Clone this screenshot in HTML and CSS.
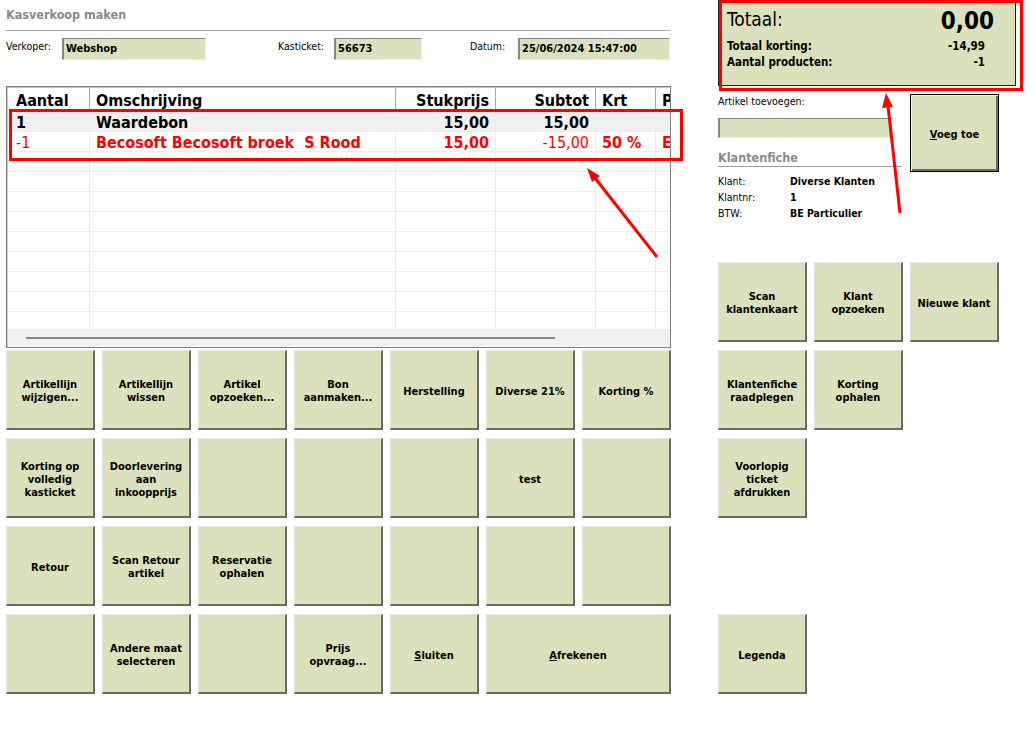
FILE: index.html
```html
<!DOCTYPE html>
<html lang="nl">
<head>
    <meta charset="UTF-8">
    <meta name="viewport" content="width=device-width, initial-scale=1.0">
    <title>Kasverkoop maken</title>
    <link rel="stylesheet" href="styles.css">
</head>
<body>
<div class="screen">
    <main class="sale">
        <h1 class="title">Kasverkoop maken</h1>

        <div class="fields">
            <span class="label label-verkoper">Verkoper:</span>
            <div class="input input-verkoper">Webshop</div>
            <span class="label label-ticket">Kasticket:</span>
            <div class="input input-ticket">56673</div>
            <span class="label label-datum">Datum:</span>
            <div class="input input-datum">25/06/2024 15:47:00</div>
        </div>

        <div class="grid">
            <div class="view">
                <table class="lines">
                    <colgroup>
                        <col class="c-aantal"><col class="c-omschr"><col class="c-prijs">
                        <col class="c-subtot"><col class="c-krt"><col class="c-extra">
                    </colgroup>
                    <thead>
                        <tr>
                            <th class="first">Aantal</th>
                            <th>Omschrijving</th>
                            <th class="num">Stukprijs</th>
                            <th class="num">Subtot</th>
                            <th>Krt</th>
                            <th>Promo</th>
                        </tr>
                    </thead>
                    <tbody>
                        <tr class="selected">
                            <td class="first">1</td>
                            <td>Waardebon</td>
                            <td class="num">15,00</td>
                            <td class="num">15,00</td>
                            <td></td>
                            <td></td>
                        </tr>
                        <tr class="retour">
                            <td class="first thin">-1</td>
                            <td>Becosoft Becosoft broek&nbsp; S Rood</td>
                            <td class="num">15,00</td>
                            <td class="num thin">-15,00</td>
                            <td>50 %</td>
                            <td>E</td>
                        </tr>
                        <tr><td class="first"></td><td></td><td></td><td></td><td></td><td></td></tr>
                        <tr><td class="first"></td><td></td><td></td><td></td><td></td><td></td></tr>
                        <tr><td class="first"></td><td></td><td></td><td></td><td></td><td></td></tr>
                        <tr><td class="first"></td><td></td><td></td><td></td><td></td><td></td></tr>
                        <tr><td class="first"></td><td></td><td></td><td></td><td></td><td></td></tr>
                        <tr><td class="first"></td><td></td><td></td><td></td><td></td><td></td></tr>
                        <tr><td class="first"></td><td></td><td></td><td></td><td></td><td></td></tr>
                        <tr><td class="first"></td><td></td><td></td><td></td><td></td><td></td></tr>
                        <tr><td class="first"></td><td></td><td></td><td></td><td></td><td></td></tr>
                    </tbody>
                </table>
            </div>
            <div class="hscroll"><div class="thumb"></div></div>
        </div>

        <div class="keys">
            <button class="key">Artikellijn wijzigen...</button>
            <button class="key">Artikellijn wissen</button>
            <button class="key">Artikel opzoeken...</button>
            <button class="key">Bon aanmaken...</button>
            <button class="key">Herstelling</button>
            <button class="key">Diverse 21%</button>
            <button class="key">Korting %</button>

            <button class="key">Korting op volledig kasticket</button>
            <button class="key">Doorlevering aan inkoopprijs</button>
            <button class="key"></button>
            <button class="key"></button>
            <button class="key"></button>
            <button class="key">test</button>
            <button class="key"></button>

            <button class="key">Retour</button>
            <button class="key">Scan Retour artikel</button>
            <button class="key">Reservatie ophalen</button>
            <button class="key"></button>
            <button class="key"></button>
            <button class="key"></button>
            <button class="key"></button>

            <button class="key"></button>
            <button class="key">Andere maat selecteren</button>
            <button class="key"></button>
            <button class="key">Prijs opvraag...</button>
            <button class="key"><span><u>S</u>luiten</span></button>
            <button class="key key-wide"><span><u>A</u>frekenen</span></button>
        </div>
    </main>

    <aside class="side">
        <div class="total">
            <div class="total-main">
                <span class="total-label">Totaal:</span>
                <span class="total-amount">0,00</span>
            </div>
            <div class="total-line">
                <span>Totaal korting:</span>
                <span>-14,99</span>
            </div>
            <div class="total-line">
                <span>Aantal producten:</span>
                <span>-1</span>
            </div>
        </div>

        <div class="add">
            <div class="add-left">
                <div class="add-label">Artikel toevoegen:</div>
                <div class="input input-artikel"></div>

                <h2 class="section">Klantenfiche</h2>
                <div class="client">
                    <div class="client-row"><span class="client-key">Klant:</span><b>Diverse Klanten</b></div>
                    <div class="client-row"><span class="client-key">Klantnr:</span><b>1</b></div>
                    <div class="client-row"><span class="client-key">BTW:</span><b>BE Particulier</b></div>
                </div>
            </div>
            <button class="key key-default"><span><u>V</u>oeg toe</span></button>
        </div>

        <div class="client-keys">
            <button class="key">Scan klantenkaart</button>
            <button class="key">Klant opzoeken</button>
            <button class="key">Nieuwe klant</button>
            <button class="key">Klantenfiche raadplegen</button>
            <button class="key">Korting ophalen</button>
            <button class="key key-print">Voorlopig ticket afdrukken</button>
            <button class="key key-legenda">Legenda</button>
        </div>
    </aside>

    <!-- red markings drawn on top of the screenshot -->
    <svg class="marks" width="1036" height="737" viewBox="0 0 1036 737">
        <rect x="10.5" y="110.5" width="671" height="49" fill="none" stroke="#ff0000" stroke-width="3"/>
        <rect x="720.5" y="1.5" width="301" height="88" fill="none" stroke="#ff0000" stroke-width="3"/>
        <line x1="657" y1="257" x2="595" y2="178" stroke="#ff0000" stroke-width="3"/>
        <polygon points="587,168 600,176 592,182" fill="#ff0000"/>
        <line x1="900" y1="213" x2="888" y2="106" stroke="#ff0000" stroke-width="3"/>
        <polygon points="886,93 893,107 882,108" fill="#ff0000"/>
    </svg>
</div>
</body>
</html>
```

FILE: styles.css
```css
body {
    margin: 0;
    background-color: #fff;
    color: #000;
    font-family: "DejaVu Sans Condensed", "DejaVu Sans", sans-serif;
    font-stretch: condensed;
    font-size: 11px;
}
.screen {
    position: relative;
    display: flex;
    width: 1036px;
    height: 737px;
    overflow: hidden;
}
.sale {
    width: 665px;
    margin-left: 6px;
}
.side {
    width: 305px;
    margin-left: 47px;
}

/* header */
.title {
    width: 664px;
    margin: 0;
    padding: 7px 0 8px;
    font-size: 12.5px;
    line-height: 15px;
    color: #8a8a8a;
    border-bottom: 1px solid #a3a3a3;
}
.fields {
    display: flex;
    margin-top: 7px;
    height: 22px;
}
.label {
    padding-top: 2px;
    font-size: 10.5px;
    line-height: 12px;
}
.label-verkoper { width: 56px; }
.label-ticket { width: 56px; margin-left: 72px; }
.label-datum { width: 48px; margin-left: 48px; }
.input {
    box-sizing: border-box;
    height: 22px;
    padding: 3px 0 0 2px;
    background-color: #dbe1bc;
    border-style: solid;
    border-width: 1px 1px 1px 2px;
    border-color: #858585 #f0f0f0 #f0f0f0 #858585;
    font-weight: bold;
    font-size: 11px;
    line-height: 14px;
}
.input-verkoper { width: 144px; }
.input-ticket { width: 88px; }
.input-datum { width: 152px; }

/* article grid */
.grid {
    box-sizing: border-box;
    height: 262px;
    margin-top: 26px;
    padding: 1px 0 0 1px;
    border: 1px solid #7d7d7d;
    box-shadow: inset 1px 1px 0 #c8c8c8;
}
.view {
    height: 241px;
    overflow: hidden;
}
.lines {
    width: 708px;
    table-layout: fixed;
    border-collapse: separate;
    border-spacing: 0;
    font-size: 16px;
    font-weight: bold;
}
.c-aantal { width: 82px; }
.c-omschr { width: 306px; }
.c-prijs { width: 100px; }
.c-subtot { width: 100px; }
.c-krt { width: 60px; }
.c-extra { width: 60px; }
.lines th {
    height: 18px;
    padding: 4px 6px 0;
    line-height: 18px;
    text-align: left;
    white-space: nowrap;
    overflow: hidden;
    background-color: #fff;
    border-right: 1px solid #a8a8a8;
}
.lines td {
    height: 16px;
    padding: 3px 6px 0;
    line-height: 16px;
    white-space: nowrap;
    overflow: hidden;
    border-right: 1px solid #ececec;
    border-bottom: 1px solid #ececec;
}
.lines .first {
    padding-left: 8px;
}
.lines .num {
    text-align: right;
}
.lines .selected td {
    height: 17px;
    padding-top: 4px;
    background-color: #f0f0f0;
}
.lines .retour td {
    color: #ff0000;
}
.lines .thin {
    font-weight: normal;
}
.hscroll {
    height: 17px;
    background-color: #f0f0f0;
    overflow: hidden;
}
.thumb {
    width: 529px;
    height: 2px;
    margin: 8px 0 0 18px;
    background-color: #888;
}

/* buttons */
.keys {
    display: grid;
    grid-template-columns: repeat(7, 89px);
    grid-auto-rows: 80px;
    column-gap: 7px;
    row-gap: 8px;
    margin-top: 2px;
}
.key {
    box-sizing: border-box;
    display: flex;
    align-items: center;
    justify-content: center;
    padding: 3px 3px 0;
    background-color: #dbe1bc;
    border-style: solid;
    border-width: 1px 2px 2px 1px;
    border-color: #e4e4e4 #6a6a6a #6a6a6a #e4e4e4;
    font-family: inherit;
    font-stretch: condensed;
    font-size: 11px;
    font-weight: bold;
    line-height: 13px;
    color: #000;
    text-align: center;
}
.key-wide {
    grid-column: span 2;
}
.key u {
    text-underline-offset: 1px;
}

/* totals */
.total {
    box-sizing: border-box;
    width: 298px;
    height: 86px;
    padding-top: 7px;
    background-color: #dbe1bc;
    border: 1px solid #1e1e1e;
}
.total-main {
    display: flex;
    justify-content: space-between;
    align-items: flex-start;
    height: 30px;
    padding: 0 21px 0 8px;
}
.total-label {
    font-size: 19px;
    line-height: 22px;
}
.total-amount {
    font-size: 24px;
    font-weight: bold;
    line-height: 26px;
}
.total-line {
    display: flex;
    justify-content: space-between;
    padding: 0 30px 0 8px;
    font-size: 11.5px;
    font-weight: bold;
    line-height: 16px;
}

/* add article + client */
.add {
    display: flex;
    height: 160px;
    margin-top: 8px;
}
.add-left {
    width: 184px;
    margin-right: 8px;
}
.add-label {
    font-size: 10.5px;
    line-height: 14px;
}
.input-artikel {
    width: 175px;
    height: 20px;
    margin-top: 10px;
}
.section {
    margin: 12px 0 0;
    padding-bottom: 1px;
    font-size: 12.5px;
    line-height: 15px;
    color: #8a8a8a;
    border-bottom: 1px solid #a3a3a3;
}
.client {
    margin-top: 6px;
}
.client-row {
    display: flex;
    font-size: 10.5px;
    line-height: 16px;
}
.client-key {
    width: 72px;
}
.key-default {
    width: 89px;
    height: 78px;
    border: 1px solid #000;
    box-shadow: inset 1px 1px 0 #f4f4f4, inset -2px -2px 0 #6a6a6a;
}
.client-keys {
    display: grid;
    grid-template-columns: repeat(3, 89px);
    grid-template-rows: repeat(5, 80px);
    column-gap: 7px;
    row-gap: 8px;
    margin-top: 8px;
}
.key-print {
    grid-column: 1;
}
.key-legenda {
    grid-column: 1;
    grid-row: 5;
}

.marks {
    position: absolute;
    top: 0;
    left: 0;
    pointer-events: none;
}
```
